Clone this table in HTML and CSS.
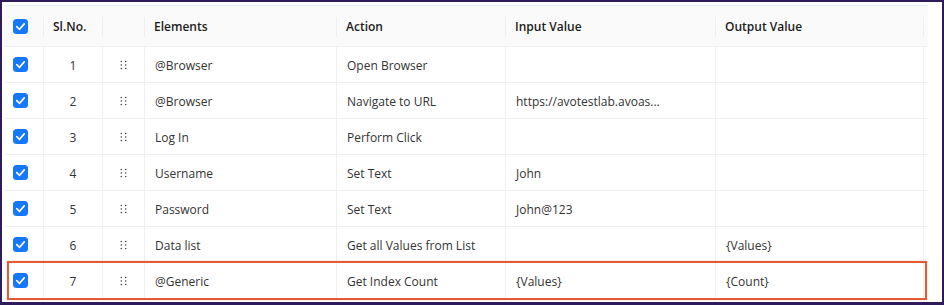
FILE: index.html
```html
<!DOCTYPE html>
<html lang="en">
<head>
<meta charset="utf-8">
<title>Steps</title>
<link rel="stylesheet" href="styles.css">
</head>
<body>
<div class="frame">
  <div class="table">
    <div class="row head">
      <div class="cell c-check"><span class="cb"><svg viewBox="0 0 16 16"><polyline points="4,8.2 7,11 12,5.2"/></svg></span></div>
      <div class="cell c-sl sep">Sl.No.</div>
      <div class="cell c-drag sep"></div>
      <div class="cell sep">Elements</div>
      <div class="cell sep">Action</div>
      <div class="cell sep">Input Value</div>
      <div class="cell sep">Output Value</div>
      <div class="cell c-end sep"></div>
    </div>

    <div class="row">
      <div class="cell c-check"><span class="cb"><svg viewBox="0 0 16 16"><polyline points="4,8.2 7,11 12,5.2"/></svg></span></div>
      <div class="cell c-sl">1</div>
      <div class="cell c-drag"><svg class="grip" viewBox="0 0 8 10"><circle cx="1.5" cy="1" r="0.95"/><circle cx="6.5" cy="1" r="0.95"/><circle cx="1.5" cy="5" r="0.95"/><circle cx="6.5" cy="5" r="0.95"/><circle cx="1.5" cy="9" r="0.95"/><circle cx="6.5" cy="9" r="0.95"/></svg></div>
      <div class="cell">@Browser</div>
      <div class="cell">Open Browser</div>
      <div class="cell"></div>
      <div class="cell"></div>
      <div class="cell c-end"></div>
    </div>

    <div class="row">
      <div class="cell c-check"><span class="cb"><svg viewBox="0 0 16 16"><polyline points="4,8.2 7,11 12,5.2"/></svg></span></div>
      <div class="cell c-sl">2</div>
      <div class="cell c-drag"><svg class="grip" viewBox="0 0 8 10"><circle cx="1.5" cy="1" r="0.95"/><circle cx="6.5" cy="1" r="0.95"/><circle cx="1.5" cy="5" r="0.95"/><circle cx="6.5" cy="5" r="0.95"/><circle cx="1.5" cy="9" r="0.95"/><circle cx="6.5" cy="9" r="0.95"/></svg></div>
      <div class="cell">@Browser</div>
      <div class="cell">Navigate to URL</div>
      <div class="cell">https://avotestlab.avoas...</div>
      <div class="cell"></div>
      <div class="cell c-end"></div>
    </div>

    <div class="row">
      <div class="cell c-check"><span class="cb"><svg viewBox="0 0 16 16"><polyline points="4,8.2 7,11 12,5.2"/></svg></span></div>
      <div class="cell c-sl">3</div>
      <div class="cell c-drag"><svg class="grip" viewBox="0 0 8 10"><circle cx="1.5" cy="1" r="0.95"/><circle cx="6.5" cy="1" r="0.95"/><circle cx="1.5" cy="5" r="0.95"/><circle cx="6.5" cy="5" r="0.95"/><circle cx="1.5" cy="9" r="0.95"/><circle cx="6.5" cy="9" r="0.95"/></svg></div>
      <div class="cell">Log In</div>
      <div class="cell">Perform Click</div>
      <div class="cell"></div>
      <div class="cell"></div>
      <div class="cell c-end"></div>
    </div>

    <div class="row">
      <div class="cell c-check"><span class="cb"><svg viewBox="0 0 16 16"><polyline points="4,8.2 7,11 12,5.2"/></svg></span></div>
      <div class="cell c-sl">4</div>
      <div class="cell c-drag"><svg class="grip" viewBox="0 0 8 10"><circle cx="1.5" cy="1" r="0.95"/><circle cx="6.5" cy="1" r="0.95"/><circle cx="1.5" cy="5" r="0.95"/><circle cx="6.5" cy="5" r="0.95"/><circle cx="1.5" cy="9" r="0.95"/><circle cx="6.5" cy="9" r="0.95"/></svg></div>
      <div class="cell">Username</div>
      <div class="cell">Set Text</div>
      <div class="cell">John</div>
      <div class="cell"></div>
      <div class="cell c-end"></div>
    </div>

    <div class="row">
      <div class="cell c-check"><span class="cb"><svg viewBox="0 0 16 16"><polyline points="4,8.2 7,11 12,5.2"/></svg></span></div>
      <div class="cell c-sl">5</div>
      <div class="cell c-drag"><svg class="grip" viewBox="0 0 8 10"><circle cx="1.5" cy="1" r="0.95"/><circle cx="6.5" cy="1" r="0.95"/><circle cx="1.5" cy="5" r="0.95"/><circle cx="6.5" cy="5" r="0.95"/><circle cx="1.5" cy="9" r="0.95"/><circle cx="6.5" cy="9" r="0.95"/></svg></div>
      <div class="cell">Password</div>
      <div class="cell">Set Text</div>
      <div class="cell">John@123</div>
      <div class="cell"></div>
      <div class="cell c-end"></div>
    </div>

    <div class="row">
      <div class="cell c-check"><span class="cb"><svg viewBox="0 0 16 16"><polyline points="4,8.2 7,11 12,5.2"/></svg></span></div>
      <div class="cell c-sl">6</div>
      <div class="cell c-drag"><svg class="grip" viewBox="0 0 8 10"><circle cx="1.5" cy="1" r="0.95"/><circle cx="6.5" cy="1" r="0.95"/><circle cx="1.5" cy="5" r="0.95"/><circle cx="6.5" cy="5" r="0.95"/><circle cx="1.5" cy="9" r="0.95"/><circle cx="6.5" cy="9" r="0.95"/></svg></div>
      <div class="cell">Data list</div>
      <div class="cell">Get all Values from List</div>
      <div class="cell"></div>
      <div class="cell">{Values}</div>
      <div class="cell c-end"></div>
    </div>

    <div class="row marked">
      <div class="cell c-check"><span class="cb"><svg viewBox="0 0 16 16"><polyline points="4,8.2 7,11 12,5.2"/></svg></span></div>
      <div class="cell c-sl">7</div>
      <div class="cell c-drag"><svg class="grip" viewBox="0 0 8 10"><circle cx="1.5" cy="1" r="0.95"/><circle cx="6.5" cy="1" r="0.95"/><circle cx="1.5" cy="5" r="0.95"/><circle cx="6.5" cy="5" r="0.95"/><circle cx="1.5" cy="9" r="0.95"/><circle cx="6.5" cy="9" r="0.95"/></svg></div>
      <div class="cell">@Generic</div>
      <div class="cell">Get Index Count</div>
      <div class="cell">{Values}</div>
      <div class="cell">{Count}</div>
      <div class="cell c-end"></div>
    </div>
  </div>
</div>
</body>
</html>
```

FILE: styles.css
```css
* { box-sizing: border-box; }

html, body {
  margin: 0;
  padding: 0;
  background: #ffffff;
}

.frame {
  width: 944px;
  height: 305px;
  border: 2px solid #2e1b5c;
  border-bottom-width: 3px;
  padding: 3px 0 0 2px;
  background: #ffffff;
  font-family: "Open Sans", "Noto Sans", sans-serif;
  font-size: 12px;
  color: #333333;
}

.table {
  width: 924px;
}

.row {
  display: grid;
  grid-template-columns: 39px 59px 42px 192px 169px 210px 208px 5px;
  height: 36px;
  border-bottom: 1px solid #f0f0f0;
  position: relative;
}

.row.head {
  height: 42px;
  background: #fafafa;
  border-top: 1px solid #e4edf2;
  border-bottom: 1px solid #f0f0f0;
  font-weight: 600;
  color: #1c1c1c;
}

.cell {
  display: flex;
  align-items: center;
  padding-left: 10px;
  padding-top: 1px;
  border-left: 1px solid #f0f0f0;
  white-space: nowrap;
  overflow: hidden;
  position: relative;
}

.cell.c-check {
  border-left: none;
  padding-left: 9px;
  padding-top: 0;
}

.row.head .cell {
  border-left: none;
}

.row.head .cell.sep::before {
  content: "";
  position: absolute;
  left: 0;
  top: 11px;
  height: 20px;
  width: 1px;
  background: #eeeeee;
}

.cell.c-sl {
  justify-content: center;
  padding-left: 0;
}

.row.head .cell.c-sl {
  justify-content: flex-start;
  padding-left: 10px;
}

.cell.c-drag {
  justify-content: center;
  padding-left: 0;
}

.cell.c-end {
  padding-left: 0;
}

.cb {
  width: 15px;
  height: 15px;
  border-radius: 3.5px;
  background: #1677ff;
  display: flex;
  align-items: center;
  justify-content: center;
}

.cb svg {
  width: 15px;
  height: 15px;
  fill: none;
  stroke: #ffffff;
  stroke-width: 1.8;
  stroke-linecap: round;
  stroke-linejoin: round;
}

.grip {
  width: 7px;
  height: 10px;
  fill: #4a4a4a;
}

.row.marked::after {
  content: "";
  position: absolute;
  left: 3px;
  right: 1px;
  top: -2px;
  bottom: -2px;
  border: 2px solid #e55b34;
  box-shadow: 0 0 1px rgba(229, 91, 52, 0.5);
  pointer-events: none;
}
```
